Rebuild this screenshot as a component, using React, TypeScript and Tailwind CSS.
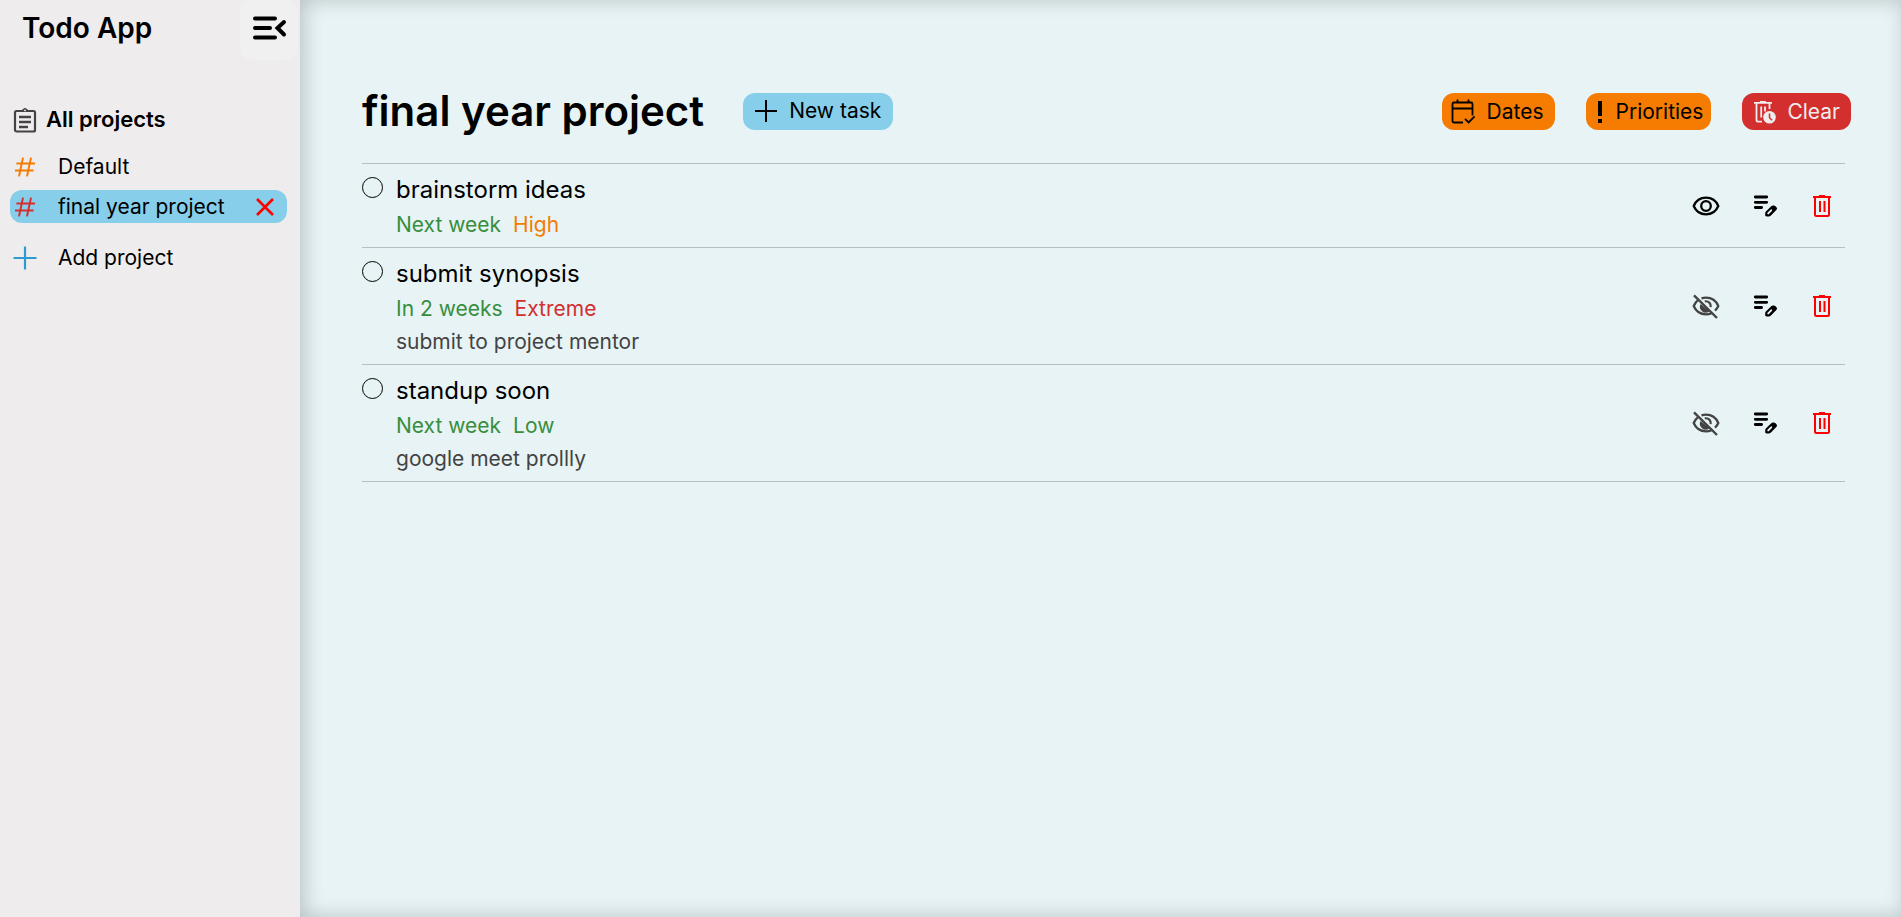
import type { ReactNode } from 'react'

type IconProps = { children: ReactNode; className: string; viewBox?: string }

function Icon({ children, className, viewBox = '0 0 24 24' }: IconProps) {
  return (
    <svg
      viewBox={viewBox}
      className={`shrink-0 ${className}`}
      fill="none"
      stroke="currentColor"
      aria-hidden="true"
    >
      {children}
    </svg>
  )
}

function MenuCloseIcon() {
  return (
    <Icon viewBox="0 0 36 28" className="h-7 w-9">
      <path d="M4 4.500h20M4 14h15M4 23.500h20" strokeWidth="4" strokeLinecap="round" />
      <path d="M33 8l-6.500 6 6.500 6.500" strokeWidth="4" strokeLinecap="round" />
    </Icon>
  )
}

function ClipboardIcon() {
  return (
    <Icon viewBox="0 0 24 26" className="h-[26px] w-6 text-[#434343]">
      <rect x="2" y="4" width="20" height="20.500" rx="1.500" strokeWidth="2.200" />
      <path d="M8 4.500l1-1.500h1a2.100 2.100 0 0 1 4 0h1l1 1.500z" fill="currentColor" strokeWidth="1" />
      <circle cx="12" cy="3.400" r=".9" fill="#efeced" stroke="none" />
      <path d="M6 10h12M6 15h12M6 20h9" strokeWidth="2.400" />
    </Icon>
  )
}

function HashIcon({ className }: { className: string }) {
  return (
    <Icon viewBox="0 0 24 24" className={`size-6 ${className}`}>
      <path d="M10 2.600L6 21.400M18 2.600L14 21.400M3.400 8.500H22M2 15.500h18.600" strokeWidth="2" />
    </Icon>
  )
}

function CalendarCheckIcon() {
  return (
    <Icon viewBox="0 0 24 26" className="h-[26px] w-6">
      <path
        d="M12 23.500H3a1.500 1.500 0 0 1-1.500-1.500v-17A1.500 1.500 0 0 1 3 3.500h17a1.500 1.500 0 0 1 1.500 1.500v11.500M1.500 9.500h20M6.500 .5v3.500M17.500 .5v3.500"
        strokeWidth="1.800"
      />
      <path d="M14 19.800l3.600 3.600 6-6" strokeWidth="1.800" />
    </Icon>
  )
}

function ClearClockIcon() {
  return (
    <Icon viewBox="0 0 24 24" className="size-6">
      <path d="M1 2.800h18M7 1.800h6" strokeWidth="1.800" />
      <path
        d="M3.500 3v17a1.600 1.600 0 0 0 1.600 1.600H9M16.500 3v6M8.200 6.500v11M12 6.500v5"
        strokeWidth="1.800"
      />
      <circle cx="16.500" cy="17.300" r="6.300" fill="currentColor" stroke="none" />
      <path d="M16.500 13.500v4.200l2.600 2.600" stroke="#d32f2f" strokeWidth="1.500" />
    </Icon>
  )
}

function EyeIcon() {
  return (
    <Icon viewBox="0 0 28 28" className="size-7 text-black">
      <path
        d="M1.700 14C3.900 8.800 8.600 5.700 14 5.700S24.100 8.800 26.300 14C24.100 19.200 19.400 22.300 14 22.300S3.900 19.200 1.700 14z"
        strokeWidth="2.300"
        strokeLinejoin="round"
      />
      <circle cx="14" cy="14" r="4.800" strokeWidth="2.300" />
    </Icon>
  )
}

function EyeOffIcon() {
  return (
    <Icon viewBox="0 0 28 28" className="size-7 text-[#434343]">
      <path
        d="M9.500 6.400C11 5.900 12.500 5.700 14 5.700c5.400 0 10.100 3.100 12.300 8.300-.8 1.800-1.900 3.300-3.300 4.600M5.800 8.400C4 9.800 2.600 11.700 1.700 14c2.200 5.200 6.900 8.300 12.300 8.300 2 0 3.900-.4 5.600-1.100"
        strokeWidth="2.300"
      />
      <path d="M8.600 12a5.800 5.800 0 0 0 8.800 7.200z" fill="currentColor" stroke="none" />
      <path d="M12.800 9.400c3.600-.8 6.500 2.200 5.900 5.700" strokeWidth="2.200" />
      <path d="M2 3.300L25 26" strokeWidth="2.400" />
    </Icon>
  )
}

function EditNoteIcon() {
  return (
    <Icon viewBox="0 0 28 28" className="size-7 text-black">
      <path d="M4.300 5h11.400M4.300 10.300h11.400M4.300 15.500h6.300" strokeWidth="2.800" strokeLinecap="round" />
      <path
        d="M14.200 23.600v-2.300q0-1 .7-1.700l5.600-5.600q.6-.6 1.400-.6h.8q.9 0 1.500.6l1 1q.8.8.8 1.600t-.7 1.500l-5.600 5.600q-.7.7-1.700.7h-2.300q-1.500 0-1.500-.8z"
        fill="currentColor"
        stroke="none"
      />
      <path d="M17.200 21.400l3-3.100" stroke="#e7f3f5" strokeWidth="1.900" strokeLinecap="round" />
    </Icon>
  )
}

function TrashIcon() {
  return (
    <Icon viewBox="0 0 24 28" className="h-7 w-6 text-[#f00]">
      <path d="M3 5h18M9 4h6" strokeWidth="2" />
      <path
        d="M5 5v17.500a1.500 1.500 0 0 0 1.500 1.500h11a1.500 1.500 0 0 0 1.500-1.500V5"
        strokeWidth="2"
      />
      <path d="M10 9v11M14.500 9v11" strokeWidth="2" />
    </Icon>
  )
}

type Task = {
  title: string
  due: string
  priority: string
  priorityColor: string
  note?: string
}

const tasks: Task[] = [
  { title: 'brainstorm ideas', due: 'Next week', priority: 'High', priorityColor: 'text-[#f57c00]' },
  {
    title: 'submit synopsis',
    due: 'In 2 weeks',
    priority: 'Extreme',
    priorityColor: 'text-[#d32f2f]',
    note: 'submit to project mentor',
  },
  {
    title: 'standup soon',
    due: 'Next week',
    priority: 'Low',
    priorityColor: 'text-[#388e3c]',
    note: 'google meet prollly',
  },
]

function TaskRow({ task }: { task: Task }) {
  return (
    <li className="flex items-center justify-between border-b border-[#b8bfc0]">
      <div className="flex items-start gap-[13px] pt-3 pb-1.5">
        <input
          type="checkbox"
          aria-label={`Complete ${task.title}`}
          className="mt-px size-[21px] shrink-0 appearance-none rounded-full border border-black"
        />
        <div>
          <h2 className="text-[24px] leading-7">{task.title}</h2>
          <p className="mt-[5px] flex gap-3 text-[21px] leading-8">
            <span className="text-[#388e3c]">{task.due}</span>
            <span className={task.priorityColor}>{task.priority}</span>
          </p>
          {task.note && <p className="text-[21px] leading-[33px] text-[#434343]">{task.note}</p>}
        </div>
      </div>
      <div className="flex items-center gap-[31px] pr-[11px]">
        <button type="button" aria-label={task.note ? 'Hide details' : 'Show details'}>
          {task.note ? <EyeOffIcon /> : <EyeIcon />}
        </button>
        <button type="button" aria-label="Edit task">
          <EditNoteIcon />
        </button>
        <button type="button" aria-label="Delete task">
          <TrashIcon />
        </button>
      </div>
    </li>
  )
}

export default function App() {
  return (
    <div className="flex min-h-screen bg-[#e7f3f5] font-['Inter',sans-serif] text-black">
      <aside className="w-[300px] shrink-0 bg-[#efeced]">
        <div className="flex h-[60px] items-start justify-between pr-0.5 pl-[22px]">
          <h1 className="pt-2 text-[28px] leading-10 font-semibold">Todo App</h1>
          <button
            type="button"
            aria-label="Close sidebar"
            className="flex h-[60px] w-[58px] justify-center rounded-xl bg-[#f0f0f0] pt-[14px]"
          >
            <MenuCloseIcon />
          </button>
        </div>
        <nav className="flex flex-col pt-[43px] pr-[13px] pl-[10px] text-[21px] leading-[33px]">
          <a href="#all" className="flex items-center gap-[9px] pl-[3px] text-[22px] font-semibold">
            <ClipboardIcon />
            All projects
          </a>
          <a href="#default" className="mt-[14px] flex items-center gap-[21px] pl-[3px]">
            <HashIcon className="text-[#f57c00]" />
            Default
          </a>
          <div className="mt-[7px] flex items-center justify-between rounded-xl bg-[#87ceeb] pr-[13px] pl-[3px]">
            <a href="#final-year-project" className="flex items-center gap-[21px]">
              <HashIcon className="text-[#d32f2f]" />
              final year project
            </a>
            <button type="button" aria-label="Remove final year project">
              <Icon viewBox="0 0 18 18" className="size-[18px] text-[#f00]">
                <path d="M1 1l16 16M17 1L1 17" strokeWidth="2.600" />
              </Icon>
            </button>
          </div>
          <button type="button" className="mt-[18px] flex items-center gap-[21px] pl-[3px]">
            <Icon className="size-6 text-[#2b9bd1]">
              <path d="M12 .5v23M.5 12h23" strokeWidth="2.200" />
            </Icon>
            Add project
          </button>
        </nav>
      </aside>

      <main className="grow pt-[81px] pr-14 pl-[62px] shadow-[inset_4px_0_20px_rgba(0,0,0,0.2)]">
        <header className="-mr-[6px] flex h-[82px] items-start justify-between">
          <div className="flex items-center gap-[39px]">
            <h1 className="text-[42px] leading-[60px] font-semibold">final year project</h1>
            <button
              type="button"
              className="flex h-[37px] items-center gap-3 rounded-xl bg-[#87ceeb] px-3 text-[21px]"
            >
              <Icon viewBox="0 0 22 22" className="size-[22px]">
                <path d="M11 0v22M0 11h22" strokeWidth="2" />
              </Icon>
              New task
            </button>
          </div>
          <div className="mt-3 flex gap-[31px] text-[21px]">
            <button
              type="button"
              className="flex h-[37px] items-center gap-3 rounded-xl bg-[#f57c00] pr-3 pl-[9px]"
            >
              <CalendarCheckIcon />
              Dates
            </button>
            <button
              type="button"
              className="flex h-[37px] items-center gap-3 rounded-xl bg-[#f57c00] pr-2 pl-[11px]"
            >
              <Icon viewBox="0 0 6 22" className="h-[22px] w-[6px]">
                <path d="M3 0v15M3 18v4" strokeWidth="4" />
              </Icon>
              Priorities
            </button>
            <button
              type="button"
              className="flex h-[37px] items-center gap-[10px] rounded-xl bg-[#d32f2f] px-[11px] text-[#efeced]"
            >
              <ClearClockIcon />
              Clear
            </button>
          </div>
        </header>
        <ul className="border-t border-[#b8bfc0]">
          {tasks.map((task) => (
            <TaskRow key={task.title} task={task} />
          ))}
        </ul>
      </main>
    </div>
  )
}
